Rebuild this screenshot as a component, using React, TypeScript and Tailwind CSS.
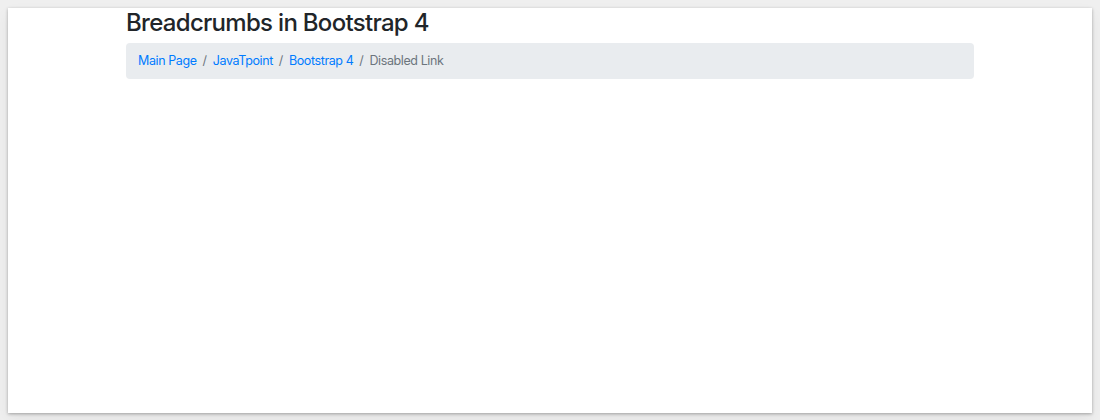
export default function App() {
  return (
    <div className="h-[420px] w-[1100px] bg-[#efefef] pt-[8px] pl-[8px] pr-[8px] overflow-hidden" style={{ fontFamily: "Inter, 'Liberation Sans', sans-serif" }}>
      <div className="h-[405px] w-[1084px] bg-white shadow-[0_1px_3px_rgba(0,0,0,0.3),0_6px_14px_rgba(0,0,0,0.06)]">
        <div className="ml-[118px] w-[848px]">
          <h2 className="text-[24px] leading-[29px] font-medium tracking-[-0.7px] text-[#212529] mb-[6px]">Breadcrumbs in Bootstrap 4</h2>
          <div className="bg-[#e9ecef] rounded-[4px] px-[12px] py-[9px] text-[12.5px] leading-[18px] tracking-[-0.4px] flex">
            <span className="text-[#007bff]">Main Page</span>
            <span className="px-[6px] text-[#6c757d]">/</span>
            <span className="text-[#007bff]">JavaTpoint</span>
            <span className="px-[6px] text-[#6c757d]">/</span>
            <span className="text-[#007bff]">Bootstrap 4</span>
            <span className="px-[6px] text-[#6c757d]">/</span>
            <span className="text-[#6c757d]">Disabled Link</span>
          </div>
        </div>
      </div>
    </div>
  );
}
